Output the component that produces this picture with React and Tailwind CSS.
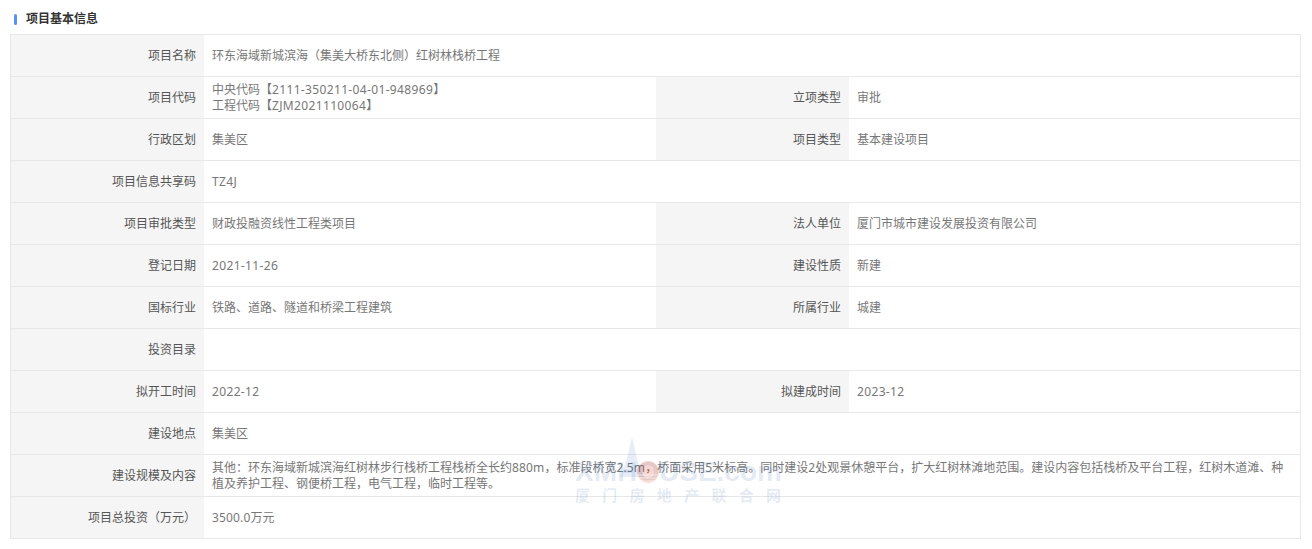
function L({ children }) {
  return <span className="tracking-[0.35px]">{children}</span>;
}

function P({ children }) {
  return <span className="tracking-[0.15px]">{children}</span>;
}

const rows = [
  [['项目名称', '环东海域新城滨海（集美大桥东北侧）红树林栈桥工程']],
  [['项目代码', <>中央代码【<L>2111-350211-04-01-948969</L>】<br />工程代码【<L>ZJM2021110064</L>】</>], ['立项类型', '审批']],
  [['行政区划', '集美区'], ['项目类型', '基本建设项目']],
  [['项目信息共享码', <L>TZ4J</L>]],
  [['项目审批类型', '财政投融资线性工程类项目'], ['法人单位', '厦门市城市建设发展投资有限公司']],
  [['登记日期', <L>2021-11-26</L>], ['建设性质', '新建']],
  [['国标行业', '铁路、道路、隧道和桥梁工程建筑'], ['所属行业', '城建']],
  [['投资目录', '']],
  [['拟开工时间', <L>2022-12</L>], ['拟建成时间', <L>2023-12</L>]],
  [['建设地点', '集美区']],
  [['建设规模及内容', <>其他：环东海域新城滨海红树林步行栈桥工程栈桥全长约<P>880m</P>，标准段桥宽<P>2.5m</P>，桥面采用<P>5</P>米标高。同时建设<P>2</P>处观景休憩平台，扩大红树林滩地范围。建设内容包括栈桥及平台工程，红树木道滩、种植及养护工程、钢便桥工程，电气工程，临时工程等。</>]],
  [['项目总投资（万元）', <><P>3500.0</P>万元</>]],
];

function Label({ children }) {
  return <div className="w-[193px] shrink-0 bg-[#f5f5f5] pr-2 text-right leading-[41px] text-[#555]">{children}</div>;
}

function Value({ children, half }) {
  return (
    <div className={half ? 'flex w-[452px] shrink-0 items-center px-2 pt-px leading-4 text-[#777]' : 'flex flex-1 items-center px-2 pt-px leading-4 text-[#777]'}>
      <div>{children}</div>
    </div>
  );
}

function Watermark() {
  return (
    <div className="pointer-events-none absolute left-[575px] top-[435px] h-[70px] w-[206px]">
      <svg width="206" height="50" viewBox="0 0 206 50" className="absolute left-0 top-0">
        <path d="M45 42 L52 24 L55 10 L57 2 L59 10 L62 24 L69 42 Z" fill="#2f66b3" fillOpacity="0.11" />
      </svg>
      <div className="absolute left-0 top-[22px] font-['Liberation_Sans',sans-serif] text-[28px] font-bold leading-[30px] text-[#2f66b3]/15">XMHOUSE.com</div>
      <svg width="206" height="50" viewBox="0 0 206 50" className="absolute left-0 top-0">
        <circle cx="73" cy="37" r="11" fill="#e0482f" fillOpacity="0.22" />
        <path d="M62 40 H84 M63 43 H83 M65 46 H81" stroke="#fff" strokeWidth="1" strokeOpacity="0.6" />
      </svg>
      <div className="absolute left-0 right-0 top-[52px] flex justify-between text-[15px] font-bold leading-4 text-[#2f66b3]/15">
        <span>厦</span><span>门</span><span>房</span><span>地</span><span>产</span><span>联</span><span>合</span><span>网</span>
      </div>
    </div>
  );
}

export default function App() {
  return (
    <div className="relative h-[549px] w-[1312px] overflow-hidden bg-white px-2.5 text-xs font-['Noto_Sans','Noto_Sans_CJK_SC',sans-serif]">
      <h2 className="flex h-[34px] items-center pt-[4px] pl-1 text-xs font-bold text-[#333]">
        <span className="mr-[9px] h-[11px] w-[3px] rounded-sm bg-[#5b8ff9]" />
        项目基本信息
      </h2>
      <div className="w-[1291px] border border-b-0 border-[#e8e8e8]">
        {rows.map((cells, i) => (
          <div key={i} className="flex h-[42px] border-b border-[#e8e8e8]">
            {cells.map(([label, value], j) => (
              <div key={j} className={cells.length === 2 && j === 0 ? 'flex' : 'flex flex-1'}>
                <Label>{label}</Label>
                <Value half={cells.length === 2 && j === 0}>{value}</Value>
              </div>
            ))}
          </div>
        ))}
      </div>
      <Watermark />
    </div>
  );
}
